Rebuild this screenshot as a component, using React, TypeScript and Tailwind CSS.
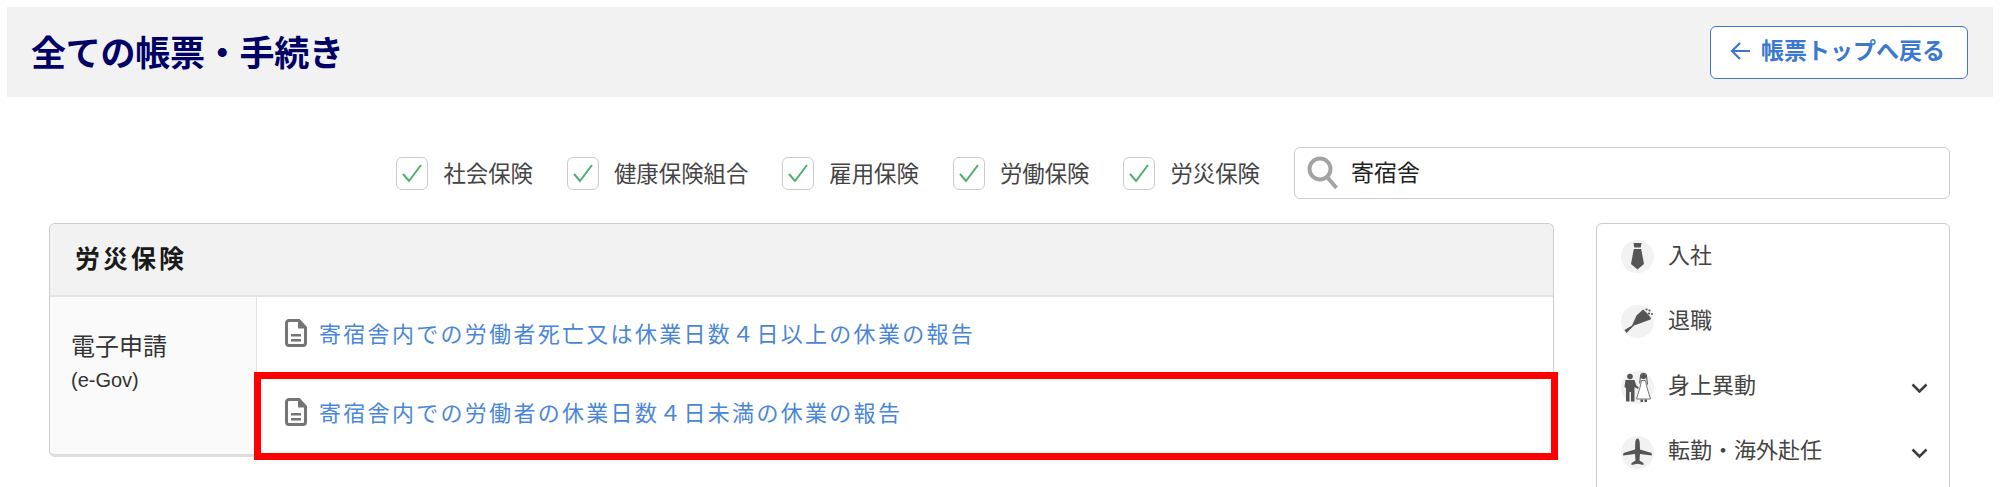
const jp = "font-['Noto_Sans_CJK_JP','Liberation_Sans',sans-serif]";

function Check({ label }: { label: string }) {
  return (
    <div className="flex items-center gap-[15px]">
      <span className="flex h-[33px] w-[32px] items-center justify-center rounded-[6px] border border-[#cccccc] bg-white">
        <svg width="24" height="24" viewBox="0 0 24 24" fill="none" stroke="#4caf6e" strokeWidth="2">
          <path d="M3 13l6 7L21 4" />
        </svg>
      </span>
      <span className="pb-[2px] text-[22.4px] leading-none text-[#444444]">{label}</span>
    </div>
  );
}

function DocIcon() {
  return (
    <svg width="22" height="28" viewBox="0 0 22 28" className="shrink-0">
      <path d="M4 1.500h10l6.500 7V24a2.500 2.500 0 0 1-2.500 2.500H4A2.500 2.500 0 0 1 1.500 24V4A2.500 2.500 0 0 1 4 1.500z" fill="none" stroke="#757575" strokeWidth="3" />
      <path d="M13 1.500l7.500 8H13z" fill="#757575" />
      <path d="M6 15h10v2.400H6zM6 20h10v2.400H6z" fill="#757575" />
    </svg>
  );
}

function DocLink({ text }: { text: string }) {
  return (
    <div className="flex h-[78.600px] items-center gap-[12px] pb-[6px] pl-[28px]">
      <DocIcon />
      <span className="pb-[2px] text-[22px] leading-none tracking-[2.3px] text-[#4a86d8]">{text}</span>
    </div>
  );
}

const Tie = (
  <svg width="33" height="33" viewBox="0 0 33 33" fill="#555555">
    <path d="M12.500 3h8l-.8 4.500h-6.400z" />
    <path d="M12.800 9h7.400l2.800 15-6.500 5.500L10 24z" />
  </svg>
);
const Bouquet = (
  <svg width="33" height="33" viewBox="0 0 33 33" fill="#555555">
    <path d="M3.500 25l7.500-4.500 4.500-10 6.500-6 3.500 3 2.500 3 2 2.500-.5 1.500-9.500 3.500-7 2.500L5.500 28z" />
    <circle cx="25.500" cy="4.500" r="1.100" />
    <circle cx="28.500" cy="5.500" r="1.100" />
    <circle cx="28" cy="8.500" r="1.100" />
    <circle cx="31" cy="9" r="1" />
  </svg>
);
const Couple = (
  <svg width="33" height="33" viewBox="0 0 33 33" fill="#555555">
    <circle cx="9" cy="5.500" r="2.800" />
    <path d="M4.500 9h9l1.800 5.500 2.500 2-1 1.500-3.300-2v14.500H10V21H8.500v9.500H5V17L3.500 16z" />
    <circle cx="22.500" cy="5.500" r="2.600" />
    <path d="M19 4.500a3.600 3.600 0 0 1 7 0l1 9h-1l-1-8a2.500 2.500 0 0 0-5 0l-.8 7h-1z" />
    <path d="M20.500 9.500h4l1.500 7 3.500 11.500H15.500L19 16.500z" fill="#ffffff" stroke="#555555" strokeWidth="0.8" />
    <path d="M19.500 28.500h2.500v2.500h-2.500zM23.500 28.500h2.500v2.500h-2.500z" />
  </svg>
);
const Plane = (
  <svg width="33" height="33" viewBox="0 0 33 33" fill="#555555">
    <path d="M16.500 2.500c1.300 0 2.100 1.800 2.200 4l.3 7 11.500 3.500.5 2.500-12-1.500-.5 6.500 4 2.500v2l-6-1.200-6 1.200v-2l4-2.500-.5-6.500-12 1.500.5-2.500L14 13.500l.3-7c.1-2.200.9-4 2.200-4z" />
  </svg>
);

function SideItem({ icon, label, chevron }: { icon: React.ReactNode; label: string; chevron?: boolean }) {
  return (
    <div className="flex h-[33px] items-center pl-[24px] pr-[21px]">
      <span className="flex h-[33px] w-[33px] shrink-0 items-center justify-center rounded-full bg-[#f2f2f2]">{icon}</span>
      <span className="ml-[14px] flex-1 pb-[8px] text-[22px] leading-none text-[#444444]">{label}</span>
      {chevron && (
        <svg width="17" height="11" viewBox="0 0 17 11" fill="none" stroke="#3d3d3d" strokeWidth="2.500" className="mt-[2px]">
          <path d="M1.500 1.500l7 7 7-7" />
        </svg>
      )}
    </div>
  );
}

export default function App() {
  return (
    <div className={`h-[487px] w-[2000px] overflow-hidden bg-white pt-[7px] ${jp}`}>
      <header className="mx-[7px] flex h-[90px] items-center justify-between bg-[#f2f2f2] pl-[24px] pr-[25px]">
        <h1 className="pb-[4px] text-[35px] font-bold leading-none tracking-[-0.25px] text-[#000066]">全ての帳票・手続き</h1>
        <button className="flex h-[53px] w-[258px] items-center gap-[11px] rounded-[6px] border border-[#3b78d0] bg-white pl-[19px] text-[23px] font-semibold leading-none text-[#3b78d0]">
          <svg width="20" height="22" viewBox="0 0 20 22" fill="none" stroke="#3b78d0" strokeWidth="2.200" className="mb-[2px]">
            <path d="M10 3l-8 8 8 8M2 11h18" />
          </svg>
          <span className="pb-[6px]">帳票トップへ戻る</span>
        </button>
      </header>

      <div className="mr-[50px] mt-[50px] flex items-center justify-end gap-[34px]">
        <Check label="社会保険" />
        <Check label="健康保険組合" />
        <Check label="雇用保険" />
        <Check label="労働保険" />
        <Check label="労災保険" />
        <div className="flex h-[52px] w-[656px] items-center rounded-[6px] border border-[#cccccc] bg-white pl-[11px]">
          <svg width="34" height="36" viewBox="0 0 34 36" fill="none" stroke="#a3a3a3" strokeWidth="4">
            <circle cx="14" cy="14" r="10.500" />
            <path d="M21.500 22.500l9 10.500" />
          </svg>
          <span className="ml-[11px] pb-[4px] text-[23px] leading-none text-[#222222]">寄宿舎</span>
        </div>
      </div>

      <div className="ml-[49px] mr-[50px] mt-[24px] flex gap-[42px]">
        <section className="relative h-[234px] w-[1505px] shrink-0 rounded-[6px] border border-b-[3px] border-[#cccccc] border-b-[#dddddd]">
          <div className="flex h-[73px] items-center rounded-t-[6px] border-b-2 border-[#e4e4e4] bg-[#f2f2f2] pb-[4px] pl-[25px] text-[25px] font-bold leading-none tracking-[3px] text-[#1a1a1a]">
            労災保険
          </div>
          <div className="flex h-[157px]">
            <div className="w-[207px] shrink-0 rounded-bl-[6px] border-r border-[#e4e4e4] bg-[#fafafa] pl-[21px] pt-[36px] text-[#333333]">
              <div className="text-[24px] leading-none">電子申請</div>
              <div className="mt-[13px] font-['Liberation_Sans',sans-serif] text-[20px] leading-none">(e-Gov)</div>
            </div>
            <div className="flex-1">
              <DocLink text="寄宿舎内での労働者死亡又は休業日数４日以上の休業の報告" />
              <DocLink text="寄宿舎内での労働者の休業日数４日未満の休業の報告" />
            </div>
          </div>
          <div className="absolute left-[204px] top-[148px] h-[88px] w-[1304px] border-[7px] border-[#ff0000]" />
        </section>

        <aside className="flex h-[400px] w-[354px] shrink-0 flex-col gap-[32.300px] rounded-t-[6px] border border-[#cccccc] pt-[16px]">
          <SideItem icon={Tie} label="入社" />
          <SideItem icon={Bouquet} label="退職" />
          <SideItem icon={Couple} label="身上異動" chevron />
          <SideItem icon={Plane} label="転勤・海外赴任" chevron />
        </aside>
      </div>
    </div>
  );
}
